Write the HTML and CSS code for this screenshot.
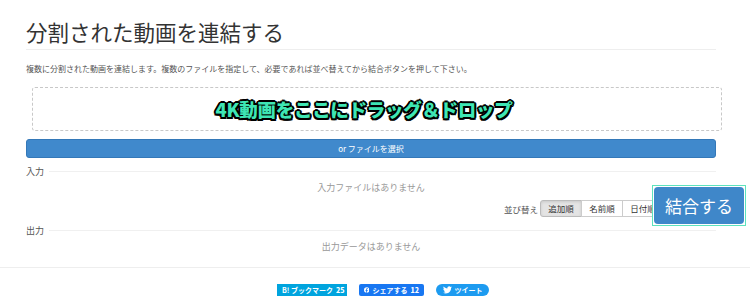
FILE: index.html
```html
<!DOCTYPE html>
<html lang="ja">
<head>
    <meta charset="UTF-8">
    <meta name="viewport" content="width=device-width, initial-scale=1.0">
    <title>分割された動画を連結する</title>
    <link rel="stylesheet" href="styles.css">
</head>
<body>
    <div class="page">
        <h1>分割された動画を連結する</h1>
        <p class="desc">複数に分割された動画を連結します。複数のファイルを指定して、必要であれば並べ替えてから結合ボタンを押して下さい。</p>

        <div class="dropzone">
            <span class="drop-text">4K動画をここにドラッグ＆ドロップ</span>
        </div>
        <button class="btn-file">or ファイルを選択</button>

        <div class="label-row"><span>入力</span><i class="rule"></i></div>
        <div class="empty">入力ファイルはありません</div>

        <div class="sort-row">
            <span class="sort-label">並び替え</span>
            <div class="btn-group">
                <span class="seg active">追加順</span>
                <span class="seg">名前順</span>
                <span class="seg">日付順</span>
            </div>
        </div>

        <div class="label-row"><span>出力</span><i class="rule"></i></div>
        <div class="empty">出力データはありません</div>

        <div class="merge-wrap">
            <button class="btn-merge">結合する</button>
        </div>
    </div>

    <div class="share">
        <span class="sh hatena">B! ブックマーク <b>25</b></span>
        <span class="sh fb">
            <svg width="8" height="8" viewBox="0 0 16 16"><circle cx="8" cy="8" r="8" fill="#fff"/><path d="M9 16V10h2l.3-2.3H9V6.3c0-.7.2-1.1 1.1-1.1h1.2V3.1c-.2 0-.9-.1-1.800-.1-1.8 0-3 1.100-3 3.1v1.6H4.5V10h2v6z" fill="#1877f2"/></svg>
            シェアする <b>12</b>
        </span>
        <span class="sh tw">
            <svg width="9" height="8" viewBox="0 0 24 20"><path d="M24 2.4c-.9.4-1.8.7-2.8.8 1-.6 1.8-1.6 2.2-2.7-1 .6-2 1-3.100 1.2C19.3.7 18 0 16.6 0c-2.7 0-4.900 2.2-4.900 4.900 0 .4 0 .8.1 1.1C7.7 5.8 4.1 3.900 1.7.9c-.4.7-.7 1.6-.7 2.5 0 1.7.9 3.2 2.2 4.100-.8 0-1.600-.2-2.200-.6v.1c0 2.400 1.700 4.400 3.900 4.800-.4.100-.8.200-1.300.200-.3 0-.6 0-.9-.1.6 2 2.400 3.400 4.600 3.400-1.700 1.300-3.800 2.100-6.100 2.100-.4 0-.8 0-1.200-.1 2.200 1.400 4.800 2.200 7.500 2.200 9.100 0 14-7.500 14-14v-.6c1-.7 1.800-1.600 2.500-2.500z" fill="#fff"/></svg>
            ツイート
        </span>
    </div>
</body>
</html>
```

FILE: styles.css
```css
body {
    margin: 0;
    font-family: "Noto Sans CJK JP", "Noto Sans", sans-serif;
    color: #333;
    background: #fff;
}
.page {
    position: relative;
    width: 690px;
    padding-left: 26px;
}
h1 {
    margin: 0;
    padding-top: 17px;
    padding-bottom: 2px;
    height: 30px;
    line-height: 30px;
    font-size: 21.5px;
    font-weight: 400;
    color: #333;
    border-bottom: 1px solid #eee;
}
.desc {
    margin: 13px 0 0;
    font-size: 8px;
    line-height: 12px;
    color: #555;
    white-space: nowrap;
}
.dropzone {
    box-sizing: border-box;
    width: 690px;
    margin: 12px 0 0 6px;
    height: 44px;
    border: 1px dashed #c8c8c8;
    border-radius: 3px;
    display: flex;
    align-items: center;
    justify-content: center;
    padding-right: 26px;
}
.drop-text {
    font-size: 18.5px;
    font-weight: 900;
    color: #3ee6b4;
    letter-spacing: -0.3px;
    text-shadow:
        -1.5px -1.5px 0 #000, 1.5px -1.5px 0 #000,
        -1.5px 1.5px 0 #000, 1.5px 1.5px 0 #000,
        0 -2px 0 #000, 0 2px 0 #000,
        -2px 0 0 #000, 2px 0 0 #000;
}
.btn-file {
    display: block;
    margin-top: 8px;
    width: 100%;
    height: 19px;
    padding: 0;
    border: 1px solid #3478b8;
    border-radius: 3px;
    background: #4089cc;
    color: #fff;
    font-family: inherit;
    font-size: 8px;
}
.label-row {
    display: flex;
    align-items: center;
    gap: 5px;
    margin-top: 7px;
    height: 12px;
    font-size: 9px;
    color: #555;
}
.rule {
    flex: 1;
    border-top: 1px solid #f0f0f0;
}
.empty {
    margin-top: 5px;
    height: 12px;
    line-height: 12px;
    text-align: center;
    font-size: 9px;
    color: #999;
}
.sort-row {
    display: flex;
    justify-content: flex-end;
    align-items: center;
    gap: 3px;
    margin-top: 6px;
    padding-right: 52px;
    height: 17px;
    font-size: 8.5px;
    color: #555;
}
.btn-group {
    display: flex;
    height: 17px;
}
.seg {
    width: 40px;
    height: 15px;
    line-height: 15px;
    text-align: center;
    border: 1px solid #ccc;
    margin-left: -1px;
    background: #fff;
    color: #333;
}
.seg:first-child {
    border-radius: 3px 0 0 3px;
}
.seg.active {
    background: #e4e4e4;
    border-color: #bbb;
    box-shadow: inset 0 1px 3px rgba(0, 0, 0, 0.12);
}
.merge-wrap {
    position: absolute;
    left: 652px;
    top: 185px;
    padding: 1px;
    border: 1px solid #5de3bd;
    background: #fff;
}
.btn-merge {
    display: block;
    width: 90px;
    height: 37px;
    padding: 0;
    border: none;
    border-radius: 4px;
    background: #3f87c9;
    color: #fff;
    font-family: inherit;
    font-size: 17px;
}
.share {
    margin-top: 14px;
    border-top: 1px solid #eee;
    padding-top: 16px;
    display: flex;
    justify-content: center;
    gap: 12px;
    padding-left: 16px;
}
.sh {
    box-sizing: border-box;
    display: inline-flex;
    align-items: center;
    gap: 3px;
    height: 12px;
    padding: 0 5px;
    font-size: 7px;
    font-weight: 700;
    color: #fff;
    white-space: nowrap;
}
.hatena {
    background: #00a4de;
    width: 70px;
}
.fb {
    background: #1877f2;
    border-radius: 2px;
    width: 65px;
}
.tw {
    background: #1d9bf0;
    border-radius: 6px;
    width: 53px;
    justify-content: center;
}
```
